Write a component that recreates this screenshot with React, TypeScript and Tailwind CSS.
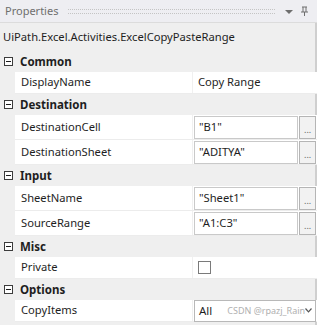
import React from "react";

type Row =
  | { kind: "header"; label: string }
  | { kind: "text"; label: string; value: string }
  | { kind: "input"; label: string; value: string }
  | { kind: "check"; label: string }
  | { kind: "select"; label: string; value: string };

const rows: Row[] = [
  { kind: "header", label: "Common" },
  { kind: "text", label: "DisplayName", value: "Copy Range" },
  { kind: "header", label: "Destination" },
  { kind: "input", label: "DestinationCell", value: "\"B1\"" },
  { kind: "input", label: "DestinationSheet", value: "\"ADITYA\"" },
  { kind: "header", label: "Input" },
  { kind: "input", label: "SheetName", value: "\"Sheet1\"" },
  { kind: "input", label: "SourceRange", value: "\"A1:C3\"" },
  { kind: "header", label: "Misc" },
  { kind: "check", label: "Private" },
  { kind: "header", label: "Options" },
  { kind: "select", label: "CopyItems", value: "All" },
];

function MinusBox() {
  return (
    <div className="relative w-[9px] h-[9px] border border-[#3c3c3c] bg-white">
      <div className="absolute left-[1px] right-[1px] top-[3px] h-px bg-[#1e1e1e]" />
    </div>
  );
}

function PropRow({ row }: { row: Row }) {
  if (row.kind === "header") {
    return (
      <div className="flex items-center h-[21px]">
        <div className="w-[15px] flex justify-center pl-[1px]">
          <MinusBox />
        </div>
        <span className="pl-[5px] font-bold text-[11.5px] text-[#1e1e1e]">{row.label}</span>
      </div>
    );
  }

  const tall = row.kind === "input";
  return (
    <div className={`flex ml-[15px] border-b border-[#ececec] ${tall ? "h-[25px]" : "h-[22px]"}`}>
      <div className="w-[178px] bg-white flex items-center pl-[6px] border-r border-[#f0f0f0] text-[11.2px] text-[#1e1e1e]">
        {row.label}
      </div>
      <div className="flex-1 bg-white flex items-center pl-[1px] pr-[4px]">
        {row.kind === "text" && <span className="pl-[4px] text-[11.2px] text-[#1e1e1e]">{row.value}</span>}
        {row.kind === "input" && (
          <div className="flex w-full h-[23px] gap-[1px]">
            <div className="flex-1 border border-[#c9c9c9] bg-white flex items-center pl-[4px] text-[11.2px] text-[#1e1e1e]">
              {row.value}
            </div>
            <div className="w-[17px] border border-[#b5b5b5] bg-[#f2f2f2] flex items-end justify-center pb-[4px] text-[9px] leading-none text-[#666]">
              ...
            </div>
          </div>
        )}
        {row.kind === "check" && (
          <div className="ml-[4px] w-[13px] h-[13px] border border-[#7a7a7a] bg-white" />
        )}
        {row.kind === "select" && (
          <div className="flex items-center w-full h-[22px] border border-[#b8b8b8] bg-white pl-[4px] pr-[3px] whitespace-nowrap">
            <span className="text-[11.5px] text-[#1e1e1e]">All</span>
            <span className="ml-[15px] text-[9px] text-[#b0b0b0]">CSDN @rpazj_Rain</span>
            <svg width="7" height="5" viewBox="0 0 7 5" className="ml-auto">
              <path d="M0.5 0.5 L3.5 3.8 L6.5 0.5" fill="none" stroke="#555" strokeWidth="1.2" />
            </svg>
          </div>
        )}
      </div>
    </div>
  );
}

export default function App() {
  return (
    <div
      className="w-[317px] h-[325px] overflow-hidden bg-[#efefef]"
      style={{ fontFamily: '"Noto Sans", "Open Sans", sans-serif' }}
    >
      {/* Title bar */}
      <div className="flex items-center h-[23px] px-[5px] bg-[#eeeef2] border-b border-[#dcdcdc]">
        <span className="text-[11px] text-[#6e6e6e]">Properties</span>
        <div className="flex-1 ml-[10px] mr-[10px] h-[5px] border-y border-dotted border-[#c4c4c4]" />
        <svg width="8" height="5" viewBox="0 0 8 5" className="mr-[7px] mt-[2px]">
          <path d="M0 0 H8 L4 4 Z" fill="#6e6e6e" />
        </svg>
        <svg width="9" height="11" viewBox="0 0 9 11" className="mr-[3px]">
          <path d="M2 1 H7 M3 1 V6 M6 1 V6 M1 6 H8 M4.5 6 V10" stroke="#6e6e6e" strokeWidth="1" fill="none" />
        </svg>
      </div>

      <div className="flex border-r-[2px] border-[#cfcfcf] h-full">
        <div className="flex-1">
          {/* Activity type */}
          <div className="h-[28px] flex items-center pl-[3px] text-[11.2px] text-[#1e1e1e]">
            UiPath.Excel.Activities.ExcelCopyPasteRange
          </div>

          {rows.map((row, i) => (
            <PropRow key={i} row={row} />
          ))}
        </div>
      </div>
    </div>
  );
}
